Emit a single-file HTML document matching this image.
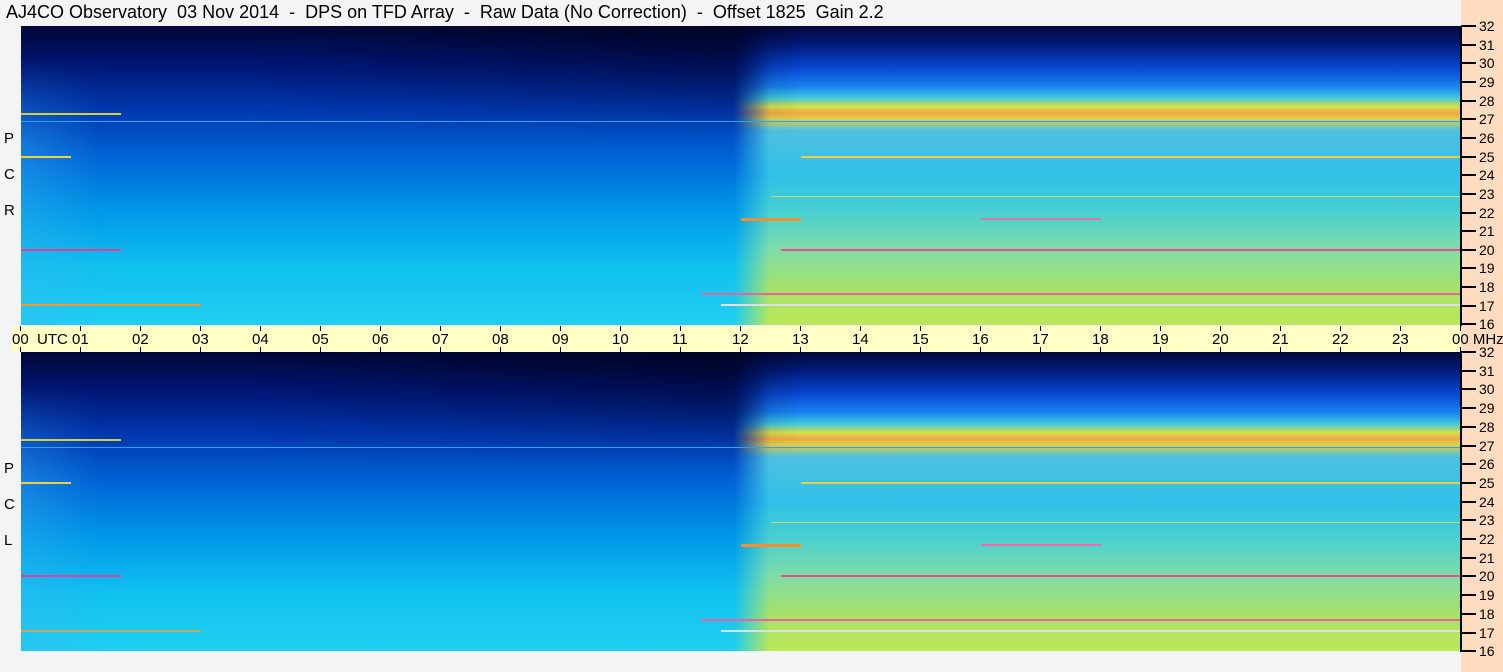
<!DOCTYPE html>
<html><head><meta charset="utf-8"><style>
body{margin:0;width:1503px;height:672px;background:#f4f4f7;position:relative;overflow:hidden;font-family:"Liberation Sans",sans-serif}
.t{position:absolute;left:6px;top:2px;font-size:18px;color:#000;white-space:pre}
.ax{position:absolute;left:1461px;top:0;width:42px;height:672px;background:#ffdcc0}
.vl{position:absolute;left:1460px;width:2px;background:#000}
.tk{position:absolute;left:1461px;width:15px;height:2px;background:#000}
.lb{position:absolute;left:1479px;font-size:14px;line-height:14px}
.p{position:absolute;left:21px;width:1440px;height:299px;overflow:hidden}
.l{position:absolute;inset:0;background:linear-gradient(#000836 0%,#001470 12%,#0038b0 28%,#0068d8 45%,#0098e8 62%,#10c0f0 80%,#20d0f0 100%)}
.r{position:absolute;inset:0;background:linear-gradient(#000838 0%,#001a78 6%,#0848d0 14%,#1880f0 20%,#40c8e0 24%,#d8e048 27%,#f0a848 29%,#e0d048 31%,#50c0e0 35%,#30c0e8 50%,#48d0d0 62%,#80dca8 75%,#a8e268 88%,#bce858 100%);
-webkit-mask-image:linear-gradient(90deg,transparent 49.5%,#000 52%);mask-image:linear-gradient(90deg,transparent 49.5%,#000 52%)}
.dk{position:absolute;left:0;top:0;width:780px;height:110px;background:linear-gradient(90deg,transparent 30%,rgba(0,0,20,.55) 90%,transparent 100%);-webkit-mask-image:linear-gradient(#000,transparent);mask-image:linear-gradient(#000,transparent)}
.lg{position:absolute;left:0;top:0;width:80px;height:299px;background:linear-gradient(90deg,rgba(60,180,240,.35),transparent);-webkit-mask-image:linear-gradient(transparent 10%,#000 40%);mask-image:linear-gradient(transparent 10%,#000 40%)}
.h{position:absolute;height:2px}
.band{position:absolute;left:12px;top:326px;width:1449px;height:26px;background:#ffffc6}
.tm{position:absolute;top:331px;font-size:15px;white-space:nowrap}
.tt{position:absolute;width:1px;background:#000}
.side{position:absolute;left:4px;font-size:15px}
</style></head><body>
<div class="t">AJ4CO Observatory  03 Nov 2014  -  DPS on TFD Array  -  Raw Data (No Correction)  -  Offset 1825  Gain 2.2</div>
<div class="ax"></div>

<div class="p" style="top:26px">
<div class="l"></div><div class="lg"></div><div class="r"></div><div class="dk"></div>
<div class="h" style="left:0;top:95px;width:1440px;background:#30a0f0;height:1px"></div>
<div class="h" style="left:0;top:87px;width:100px;background:#d0d040"></div>
<div class="h" style="left:0;top:130px;width:50px;background:#f0d040"></div>
<div class="h" style="left:780px;top:130px;width:660px;background:#e8d040"></div>
<div class="h" style="left:0;top:223px;width:100px;background:#e040a0"></div>
<div class="h" style="left:760px;top:223px;width:680px;background:#e85090"></div>
<div class="h" style="left:720px;top:192px;width:60px;background:#f09030;height:3px"></div>
<div class="h" style="left:960px;top:192px;width:120px;background:#e070b0"></div>
<div class="h" style="left:680px;top:267px;width:760px;background:#f060a0"></div>
<div class="h" style="left:700px;top:278px;width:740px;background:#e0e0e0"></div>
<div class="h" style="left:0;top:278px;width:180px;background:#e0a040"></div>
<div class="h" style="left:750px;top:170px;width:690px;background:#c0e060;height:1px"></div>
</div>

<div class="p" style="top:352px">
<div class="l"></div><div class="lg"></div><div class="r"></div><div class="dk"></div>
<div class="h" style="left:0;top:95px;width:1440px;background:#30a0f0;height:1px"></div>
<div class="h" style="left:0;top:87px;width:100px;background:#d0d040"></div>
<div class="h" style="left:0;top:130px;width:50px;background:#f0d040"></div>
<div class="h" style="left:780px;top:130px;width:660px;background:#e8d040"></div>
<div class="h" style="left:0;top:223px;width:100px;background:#e040a0"></div>
<div class="h" style="left:760px;top:223px;width:680px;background:#e85090"></div>
<div class="h" style="left:720px;top:192px;width:60px;background:#f09030;height:3px"></div>
<div class="h" style="left:960px;top:192px;width:120px;background:#e070b0"></div>
<div class="h" style="left:680px;top:267px;width:760px;background:#f060a0"></div>
<div class="h" style="left:700px;top:278px;width:740px;background:#e0e0e0"></div>
<div class="h" style="left:0;top:278px;width:180px;background:#e0a040"></div>
<div class="h" style="left:750px;top:170px;width:690px;background:#c0e060;height:1px"></div>
</div>

<div class="band"></div>
<div class="vl" style="top:26px;height:300px"></div>
<div class="vl" style="top:352px;height:300px"></div>

<div class="side" style="top:130px">P</div>
<div class="side" style="top:166px">C</div>
<div class="side" style="top:202px">R</div>
<div class="side" style="top:460px">P</div>
<div class="side" style="top:496px">C</div>
<div class="side" style="top:532px">L</div>

<div id="ticks"></div>
<script>
var o='';
for(var i=0;i<=16;i++){var y1=26+i*18.65,y2=352+i*18.7;var v=32-i;
o+='<div class="tk" style="top:'+(y1-1)+'px"></div><div class="lb" style="top:'+(y1-7)+'px">'+v+'</div>';
o+='<div class="tk" style="top:'+(y2-1)+'px"></div><div class="lb" style="top:'+(y2-7)+'px">'+v+'</div>';}
for(var h=0;h<=24;h++){var x=20+h*60;
o+='<div class="tt" style="left:'+x+'px;top:326px;height:5px"></div><div class="tt" style="left:'+x+'px;top:347px;height:5px"></div>';
var s=(h%24<10?'0':'')+(h%24);
if(h==0)s='00 &nbsp;UTC';if(h==24)s='00 MHz';
o+='<div class="tm" style="left:'+(x-8)+'px">'+s+'</div>';}
document.getElementById('ticks').innerHTML=o;
</script>
</body></html>
